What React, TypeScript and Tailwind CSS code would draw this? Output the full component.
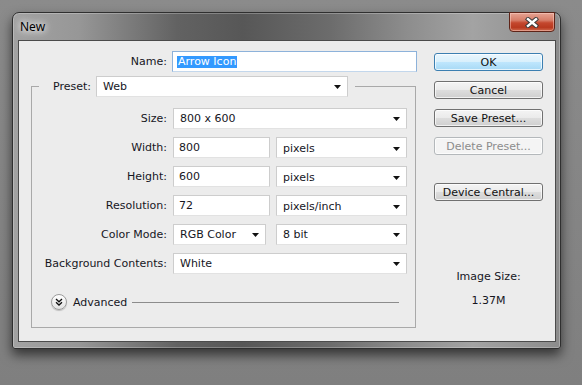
import type { ReactNode } from "react";

function DropArrow() {
  return (
    <svg width="7" height="4" viewBox="0 0 7 4" aria-hidden="true">
      <path d="M0 0h7L3.5 4Z" fill="#111" />
    </svg>
  );
}

function Select({ value, className = "" }: { value: string; className?: string }) {
  return (
    <div
      className={`flex h-[21px] items-center justify-between border border-[#cdcdcd] border-b-[#e2e2e2] bg-white pl-[6px] pr-[6px] ${className}`}
    >
      <span>{value}</span>
      <DropArrow />
    </div>
  );
}

function TextBox({ value, className = "" }: { value: string; className?: string }) {
  return (
    <div
      className={`flex h-[21px] items-center border border-[#cdcdcd] border-b-[#e2e2e2] bg-white pl-[5px] ${className}`}
    >
      {value}
    </div>
  );
}

function Row({ label, children, gap = "gap-[6px]" }: { label: string; children: ReactNode; gap?: string }) {
  return (
    <div className="flex items-center">
      <div className="w-[135px] text-right">{label}</div>
      <div className={`ml-[6px] flex ${gap}`}>{children}</div>
    </div>
  );
}

function Button({
  children,
  kind = "normal",
  className = "",
}: {
  children: ReactNode;
  kind?: "normal" | "default" | "disabled";
  className?: string;
}) {
  const look =
    kind === "default"
      ? "border-[#3c7fb1] bg-[linear-gradient(180deg,#eaf6fd_0%,#d9f0fc_48%,#bee6fd_52%,#a7d9f5_100%)] text-[#111]"
      : kind === "disabled"
        ? "border-[#b4b8bb] bg-[#f4f4f4] text-[#8c8c8c]"
        : "border-[#707070] bg-[linear-gradient(180deg,#f4f4f4_0%,#ebebeb_48%,#dddddd_52%,#cfcfcf_100%)] text-[#111]";
  return (
    <div
      className={`flex h-[18px] w-[109px] items-center justify-center rounded-[3px] border shadow-[inset_0_0_0_1px_rgba(255,255,255,0.7)] ${look} ${className}`}
    >
      {children}
    </div>
  );
}

function CloseButton() {
  return (
    <div className="mr-[5px] -mt-px flex h-[20px] w-[46px] items-center justify-center rounded-b-[4px] border border-[#5e2418] bg-[linear-gradient(180deg,#e6a393_0%,#d77e69_40%,#c4472e_55%,#b8391f_80%,#cf6a4f_100%)] shadow-[inset_0_0_0_1px_rgba(255,220,210,0.45)]">
      <svg width="14" height="11" viewBox="0 0 14 11" aria-hidden="true">
        <path d="M3 2.2L11 8.8M11 2.2L3 8.8" stroke="#3a3a3a" strokeWidth="4.4" strokeLinecap="square" />
        <path d="M3 2.2L11 8.8M11 2.2L3 8.8" stroke="#fff" strokeWidth="2.4" strokeLinecap="square" />
      </svg>
    </div>
  );
}

function AdvancedToggle() {
  return (
    <div className="flex h-[16px] w-[16px] items-center justify-center rounded-full border border-[#9c9c9c] bg-[linear-gradient(180deg,#ffffff,#e2e2e2)] shadow-[0_1px_1px_rgba(0,0,0,0.2)]">
      <svg width="8" height="8" viewBox="0 0 8 8" aria-hidden="true">
        <path d="M1 1l3 2.8L7 1M1 4.2L4 7l3-2.8" fill="none" stroke="#111" strokeWidth="1.3" />
      </svg>
    </div>
  );
}

export default function App() {
  return (
    <div className="h-[385px] w-[582px] overflow-hidden bg-[linear-gradient(180deg,#8b8b8b,#7f7f7f)] pl-[12px] pt-[12px] font-['DejaVu_Sans',sans-serif] text-[11px] leading-[13px] text-[#16161e]">
      <div className="flex h-[337px] w-[549px] flex-col rounded-t-[7px] rounded-b-[3px] border border-[#2f2f2f] bg-[linear-gradient(90deg,#a2a2a2_0%,#979797_12%,#626262_30%,#575757_42%,#6c6c6c_58%,#8d8d8d_72%,#a3a3a3_84%,#8c8c8c_100%)] shadow-[0_6px_12px_rgba(0,0,0,0.6),inset_0_0_0_1px_rgba(255,255,255,0.25)]">
        {/* title bar */}
        <div className="flex h-[27px] shrink-0 items-start justify-between">
          <span className="ml-[7px] mt-[6px] font-['Noto_Sans',sans-serif] text-[12px] leading-[16px] text-black [text-shadow:0_0_6px_#fff,0_0_10px_#fff]">
            New
          </span>
          <CloseButton />
        </div>

        {/* client area */}
        <div className="mb-[6px] ml-[5px] mr-[4px] flex flex-1 border border-[#4b4b4b] bg-[#ececec]">
          {/* form column */}
          <div className="flex w-[399px] flex-col">
            <div className="mt-[10px] flex items-center">
              <div className="w-[148px] text-right">Name:</div>
              <div className="ml-[5px] flex h-[21px] w-[245px] items-center border border-[#8db2da] border-b-[#c3d7ec] bg-white pl-[4px]">
                <span className="bg-[#3399ff] px-px leading-[12px] text-white">Arrow Icon</span>
              </div>
            </div>

            {/* preset group */}
            <div className="ml-[12px] mt-[14px] flex h-[242px] w-[385px] flex-col border border-[#a9a9a9]">
              <div className="-mt-[11px] ml-[7px] flex w-fit items-center bg-[#ececec] pl-[14px] pr-[7px]">
                <span>Preset:</span>
                <Select value="Web" className="ml-[5px] w-[252px]" />
              </div>

              <div className="mt-[11px] flex flex-col gap-[8px]">
                <Row label="Size:">
                  <Select value="800 x 600" className="w-[234px]" />
                </Row>
                <Row label="Width:">
                  <TextBox value="800" className="w-[97px]" />
                  <Select value="pixels" className="w-[131px] pt-[2px]" />
                </Row>
                <Row label="Height:">
                  <TextBox value="600" className="w-[97px]" />
                  <Select value="pixels" className="w-[131px] pt-[2px]" />
                </Row>
                <Row label="Resolution:">
                  <TextBox value="72" className="w-[97px]" />
                  <Select value="pixels/inch" className="w-[131px] pt-[2px]" />
                </Row>
                <Row label="Color Mode:" gap="gap-[10px]">
                  <Select value="RGB Color" className="w-[93px]" />
                  <Select value="8 bit" className="w-[131px]" />
                </Row>
                <Row label="Background Contents:">
                  <Select value="White" className="w-[234px]" />
                </Row>
              </div>

              <div className="ml-[19px] mr-[16px] mt-[20px] flex items-center">
                <AdvancedToggle />
                <span className="ml-[6px]">Advanced</span>
                <div className="ml-[5px] h-px flex-1 bg-[#8c8c8c]" />
              </div>
            </div>
          </div>

          {/* buttons column */}
          <div className="ml-[16px] flex w-[109px] flex-col">
            <Button kind="default" className="mt-[12px]">OK</Button>
            <Button className="mt-[10px]">Cancel</Button>
            <Button className="mt-[10px]">Save Preset...</Button>
            <Button kind="disabled" className="mt-[10px]">Delete Preset...</Button>
            <Button className="mt-[28px]">Device Central...</Button>
            <div className="mt-[69px] text-center">Image Size:</div>
            <div className="mt-[11px] text-center">1.37M</div>
          </div>
        </div>
      </div>
    </div>
  );
}
